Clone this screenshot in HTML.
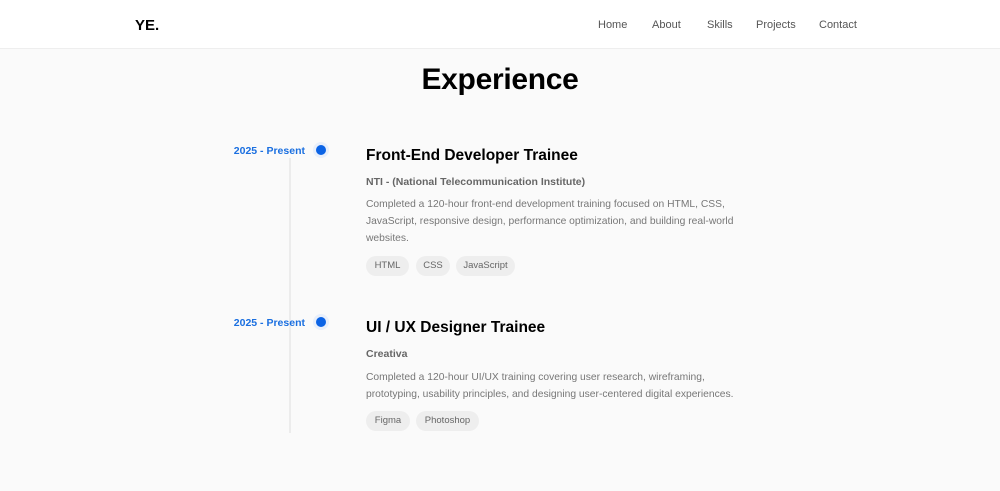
<!DOCTYPE html>
<html><head><style>
*{margin:0;padding:0;box-sizing:border-box}
body{width:1000px;height:491px;background:#fafafa;font-family:"Liberation Sans",sans-serif;position:relative;overflow:hidden}
.hdr{position:absolute;left:0;top:0;width:1000px;height:49px;background:#fff;border-bottom:1px solid #eee}
.logo{position:absolute;left:135px;top:17px;font-weight:bold;font-size:15px;color:#000}
.nav{position:absolute;top:19px;font-size:11px;color:#555}
h1{position:absolute;left:0;width:1000px;text-align:center;top:63px;font-size:30px;font-weight:bold;color:#000;letter-spacing:-0.3px}
.line{position:absolute;left:289px;top:158px;width:2px;height:275px;background:#ececec}
.date{position:absolute;right:695px;font-size:10.5px;color:#1a6fe0;font-weight:bold;white-space:nowrap}
.dot{position:absolute;left:316px;width:10px;height:10px;border-radius:50%;background:#0b63e5;box-shadow:0 0 0 3px #e8effb}
.t{position:absolute;left:366px;font-size:15.5px;font-weight:bold;color:#000;white-space:nowrap}
.c{position:absolute;left:366px;font-size:10.5px;font-weight:bold;color:#666;white-space:nowrap}
.d{position:absolute;left:366px;font-size:10.3px;color:#777;line-height:17px;white-space:nowrap}
.tag{position:absolute;height:20px;line-height:20px;border-radius:10px;background:#eeeeee;font-size:9.5px;color:#666;text-align:center}
</style></head><body>
<div class="hdr">
<div class="logo">YE.</div>
<div class="nav" style="left:598px">Home</div>
<div class="nav" style="left:652px">About</div>
<div class="nav" style="left:707px">Skills</div>
<div class="nav" style="left:756px">Projects</div>
<div class="nav" style="left:819px">Contact</div>
</div>
<h1>Experience</h1>
<div class="line"></div>

<div class="date" style="top:145px">2025 - Present</div>
<div class="dot" style="top:145px"></div>
<div class="t" style="top:147px">Front-End Developer Trainee</div>
<div class="c" style="top:176px">NTI - (National Telecommunication Institute)</div>
<div class="d" style="top:196px">Completed a 120-hour front-end development training focused on HTML, CSS,<br>JavaScript, responsive design, performance optimization, and building real-world<br>websites.</div>
<div class="tag" style="left:366px;top:256px;width:43px">HTML</div>
<div class="tag" style="left:416px;top:256px;width:34px">CSS</div>
<div class="tag" style="left:456px;top:256px;width:59px">JavaScript</div>

<div class="date" style="top:317px">2025 - Present</div>
<div class="dot" style="top:317px"></div>
<div class="t" style="top:319px">UI / UX Designer Trainee</div>
<div class="c" style="top:348px">Creativa</div>
<div class="d" style="top:369px">Completed a 120-hour UI/UX training covering user research, wireframing,<br>prototyping, usability principles, and designing user-centered digital experiences.</div>
<div class="tag" style="left:366px;top:411px;width:44px">Figma</div>
<div class="tag" style="left:416px;top:411px;width:63px">Photoshop</div>
</body></html>
